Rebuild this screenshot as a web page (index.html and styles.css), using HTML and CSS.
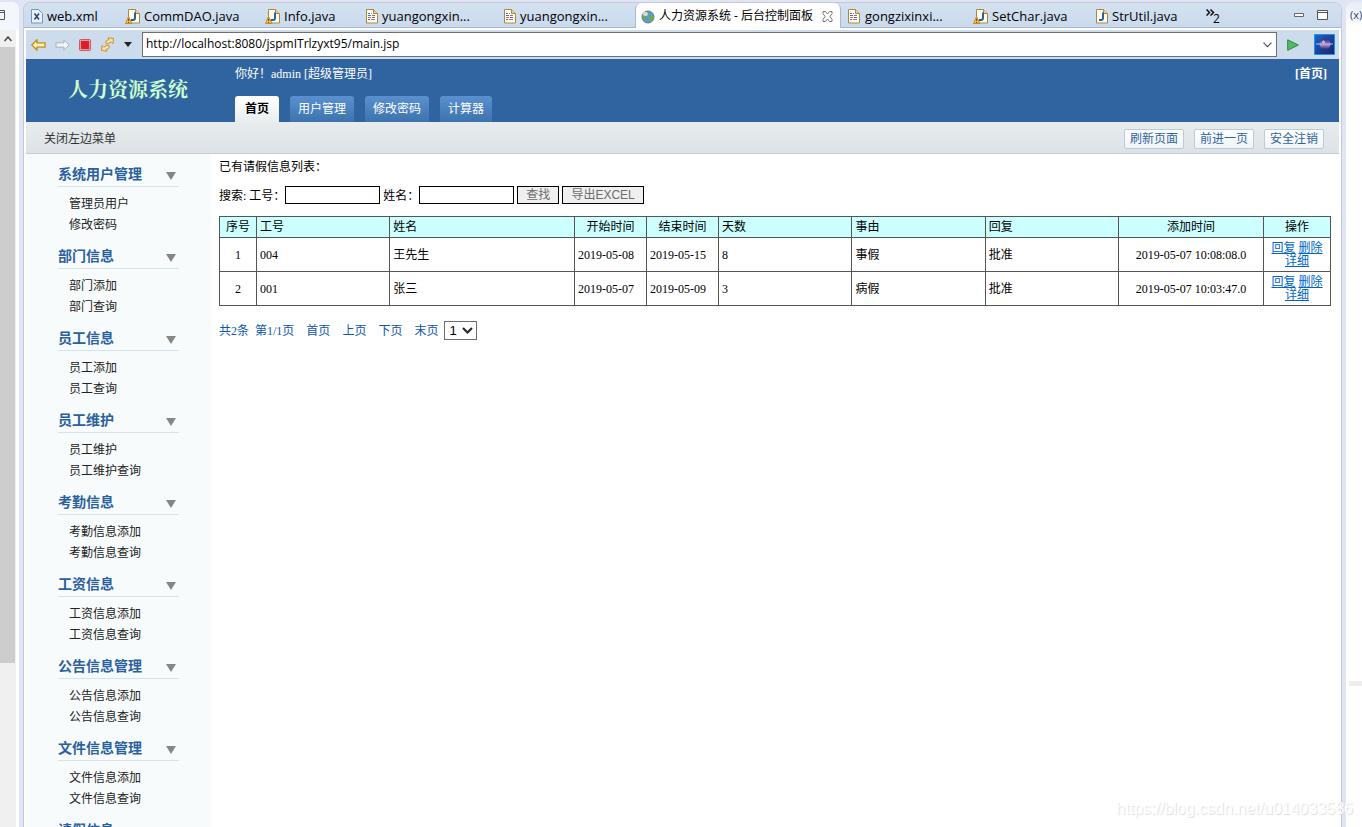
FILE: index.html
```html
<!DOCTYPE html>
<html lang="zh-CN">
<head>
<meta charset="utf-8">
<title>人力资源系统 - 后台控制面板</title>
<link rel="stylesheet" href="styles.css">
</head>
<body>
<svg class="defs" aria-hidden="true">
  <defs>
    <symbol id="page" viewBox="0 0 12 15">
      <path d="M.5.5h7l4 4v9.500h-11z" fill="#fffdf4" stroke="#a98a3c"/><path d="M7.500.5v4h4" fill="#ecd391" stroke="#a98a3c"/>
    </symbol>
    <symbol id="doc" viewBox="0 0 12 15">
      <use href="#page" width="12" height="15"/>
      <path d="M2 4.500h2M2 6.500h3M6 8.500h3M2 10.500h2" stroke="#3f74c4"/><path d="M5 4.500h1M2 8.500h3M5 10.500h4" stroke="#d1605e"/><path d="M6 6.500h3" stroke="#7a6fb0"/>
    </symbol>
    <symbol id="java" viewBox="0 0 12 15">
      <use href="#page" width="12" height="15"/>
      <path d="M7 3.500v5.500q0 2-2 2H3" fill="none" stroke="#2b6195" stroke-width="2"/>
    </symbol>
    <symbol id="javawarn" viewBox="0 0 15 15">
      <use href="#java" x="3" width="12" height="15"/>
      <path d="M3.500 7.500 7 14.500H.5z" fill="#f5bd55" stroke="#c98829"/><path d="M3.700 9.500v2.500M3.700 13v1" stroke="#5a3a10"/>
    </symbol>
  </defs>
</svg>
<div class="workbench">
  <aside class="left-view">
    <div class="view-tab"><svg width="5" height="10" viewBox="0 0 5 10"><path d="M0 .5h4.500v9H0M0 2.500h4" fill="none" stroke="#555"/></svg></div>
    <div class="scroll-up"><svg width="8" height="6" viewBox="0 0 8 6"><path d="m.5 5 3.500-4 3.500 4" fill="none" stroke="#444" stroke-width="1.500"/></svg></div>
    <div class="scroll-track"><div class="scroll-thumb"></div></div>
  </aside>

  <section class="editor">
    <div class="tabs">
      <button class="tab tab-xml"><svg width="12" height="15" viewBox="0 0 12 15"><path d="M.5.5h7l4 4v9.500h-11z" fill="#e9f2fb" stroke="#7995b5"/><path d="m3.500 4.500 4.500 6M8 4.500l-4.500 6" stroke="#1f4778" stroke-width="1.500"/></svg><span>web.xml</span></button>
      <button class="tab tab-comm"><svg width="15" height="15"><use href="#javawarn"/></svg><span>CommDAO.java</span></button>
      <button class="tab tab-info"><svg width="15" height="15"><use href="#javawarn"/></svg><span>Info.java</span></button>
      <button class="tab tab-doc"><svg width="12" height="15"><use href="#doc"/></svg><span>yuangongxin...</span></button>
      <button class="tab tab-doc"><svg width="12" height="15"><use href="#doc"/></svg><span>yuangongxin...</span></button>
      <button class="tab tab-active"><svg width="14" height="14" viewBox="0 0 14 14"><circle cx="7" cy="7" r="6" fill="#5c9ccb" stroke="#5d7894"/><path d="M2 4q2-3 5-2l1 2-3 2 1 2-2 1-3-2zM9 6l3-1 1 3-3 4-2-2z" fill="#73a852"/><ellipse cx="4.500" cy="4" rx="2.500" ry="2" fill="#fff" opacity=".7"/></svg><span>人力资源系统 - 后台控制面板</span><svg class="close" width="11" height="11" viewBox="0 0 11 11"><path d="M1 .5h2.500l2 2.500 2-2.500H10v2L8 5.500l2 3v2H7.500l-2-2.500-2 2.500H1v-2l2-3-2-3z" fill="#fff" stroke="#777"/></svg></button>
      <button class="tab tab-gongzi"><svg width="12" height="15"><use href="#doc"/></svg><span>gongzixinxi...</span></button>
      <button class="tab tab-char"><svg width="15" height="15"><use href="#javawarn"/></svg><span>SetChar.java</span></button>
      <button class="tab tab-str"><svg width="12" height="15"><use href="#java"/></svg><span>StrUtil.java</span></button>
      <button class="more" aria-label="更多"><svg width="9" height="7" viewBox="0 0 9 7"><path d="m.5.5 3 3-3 3M4.500.5l3 3-3 3" fill="none" stroke="#111" stroke-width="1.500"/></svg><span>2</span></button>
      <div class="win">
        <button aria-label="最小化"><svg width="10" height="4"><path d="M.5.5h9v3h-9z" fill="#fff" stroke="#666"/></svg></button>
        <button aria-label="最大化"><svg width="11" height="10"><path d="M.5.5h10v9H.5zM.5 2.500h10" fill="#fff" stroke="#555"/></svg></button>
      </div>
    </div>

    <div class="toolbar">
      <button aria-label="后退"><svg width="15" height="12" viewBox="0 0 15 12"><path d="M.8 6 6 .8v3h8v4.400H6v3z" fill="#fff1b8" stroke="#c68a16" stroke-width="1.300"/></svg></button>
      <button aria-label="前进"><svg width="15" height="12" viewBox="0 0 15 12"><path d="M14.200 6 9 .8v3H1v4.400h8v3z" fill="#f1f4f7" stroke="#aab1ba"/></svg></button>
      <button aria-label="停止"><svg width="12" height="12"><rect x=".5" y=".5" width="11" height="11" rx="1" fill="#e79a9a" stroke="#c75c60"/><path d="M2 2h8v8H2z" fill="#dc1e2c"/></svg></button>
      <button aria-label="刷新"><svg width="15" height="15" viewBox="0 0 15 15"><path d="M5.500 6q0-3 3.500-3.500L8 .8l5.500.7-.5 5-1.700-1.500Q9 5 8.500 7zM9.500 9q0 3-3.500 3.500l1 1.700-5.500-.7.500-5L3.700 10Q6 10 6.500 8z" fill="#fce29a" stroke="#c28a26" stroke-width=".9"/></svg></button>
      <button aria-label="刷新选项"><svg width="8" height="5"><path d="M0 0h8L4 5z" fill="#222"/></svg></button>
      <div class="address">
        <input type="text" aria-label="地址" value="http://localhost:8080/jspmITrlzyxt95/main.jsp">
        <button aria-label="历史地址"><svg width="9" height="6" viewBox="0 0 9 6"><path d="m.5.7 4 4 4-4" fill="none" stroke="#555" stroke-width="1.200"/></svg></button>
      </div>
      <button class="go" aria-label="转到"><svg width="12" height="12" viewBox="0 0 12 12"><path d="M.7.8 11.300 6 .7 11.300z" fill="#56b765" stroke="#2b8b43"/></svg></button>
      <svg class="brand" width="21" height="21" viewBox="0 0 21 21"><defs><linearGradient id="sky" x2="1" y2="1"><stop stop-color="#1a66c8"/><stop offset="1" stop-color="#17246c"/></linearGradient><linearGradient id="orb" y2="1" x2="0"><stop stop-color="#3b276c"/><stop offset=".4" stop-color="#7f66b4"/><stop offset=".6" stop-color="#a48fd0"/><stop offset="1" stop-color="#302065"/></linearGradient></defs><path d="M.5.500h20v20H.5z" fill="url(#sky)" stroke="#2291ee"/><circle cx="11" cy="10" r="5.500" fill="url(#orb)"/><path d="M2 10h17" stroke="#b5c7f5"/><circle cx="9.500" cy="8" r="1.500" fill="#e8dcfa" opacity=".7"/></svg>
    </div>

    <div class="page">
      <header class="head">
        <h1>人力资源系统</h1>
        <div class="head-main">
          <p>你好！admin [超级管理员]</p>
          <nav>
            <a class="current" href="#">首页</a>
            <a href="#">用户管理</a>
            <a href="#">修改密码</a>
            <a href="#">计算器</a>
          </nav>
        </div>
        <a class="home" href="#">[首页]</a>
      </header>
      <div class="subbar">
        <a class="toggle" href="#">关闭左边菜单</a>
        <a class="act" href="#">刷新页面</a>
        <a class="act" href="#">前进一页</a>
        <a class="act" href="#">安全注销</a>
      </div>
      <div class="body">
        <nav class="side">
          <section><h2>系统用户管理<i></i></h2><a href="#">管理员用户</a><a href="#">修改密码</a></section>
          <section><h2>部门信息<i></i></h2><a href="#">部门添加</a><a href="#">部门查询</a></section>
          <section><h2>员工信息<i></i></h2><a href="#">员工添加</a><a href="#">员工查询</a></section>
          <section><h2>员工维护<i></i></h2><a href="#">员工维护</a><a href="#">员工维护查询</a></section>
          <section><h2>考勤信息<i></i></h2><a href="#">考勤信息添加</a><a href="#">考勤信息查询</a></section>
          <section><h2>工资信息<i></i></h2><a href="#">工资信息添加</a><a href="#">工资信息查询</a></section>
          <section><h2>公告信息管理<i></i></h2><a href="#">公告信息添加</a><a href="#">公告信息查询</a></section>
          <section><h2>文件信息管理<i></i></h2><a href="#">文件信息添加</a><a href="#">文件信息查询</a></section>
          <section><h2>请假信息</h2></section>
        </nav>
        <main>
          <p class="caption">已有请假信息列表：</p>
          <form class="search">
            <label for="no">搜索: 工号：</label><input id="no" type="text">
            <label for="name">姓名：</label><input id="name" type="text">
            <button type="button">查找</button>
            <button type="button">导出EXCEL</button>
          </form>
          <table>
            <colgroup><col class="c-idx"><col class="c-wide"><col><col class="c-date"><col class="c-date"><col class="c-wide"><col class="c-wide"><col class="c-wide"><col class="c-time"><col class="c-ops"></colgroup>
            <thead>
              <tr><th class="mid">序号</th><th>工号</th><th>姓名</th><th class="mid">开始时间</th><th class="mid">结束时间</th><th>天数</th><th>事由</th><th>回复</th><th class="mid">添加时间</th><th class="mid">操作</th></tr>
            </thead>
            <tbody>
              <tr><td class="mid">1</td><td>004</td><td>王先生</td><td>2019-05-08</td><td>2019-05-15</td><td>8</td><td>事假</td><td>批准</td><td class="mid">2019-05-07 10:08:08.0</td><td class="mid"><a href="#">回复</a> <a href="#">删除</a> <a href="#">详细</a></td></tr>
              <tr><td class="mid">2</td><td>001</td><td>张三</td><td>2019-05-07</td><td>2019-05-09</td><td>3</td><td>病假</td><td>批准</td><td class="mid">2019-05-07 10:03:47.0</td><td class="mid"><a href="#">回复</a> <a href="#">删除</a> <a href="#">详细</a></td></tr>
            </tbody>
          </table>
          <div class="pager">
            <span class="count">共2条</span><span>第1/1页</span><a href="#">首页</a><a href="#">上页</a><a href="#">下页</a><a class="last" href="#">末页</a>
            <div class="pick"><select aria-label="页码"><option>1</option></select><svg width="11" height="7" viewBox="0 0 11 7"><path d="m1 1 4.500 4.500L10 1" fill="none" stroke="#222" stroke-width="2"/></svg></div>
          </div>
        </main>
      </div>
    </div>
  </section>

  <aside class="right-view"><div class="view-tab">(x)</div><div class="sash"></div></aside>
</div>
<div class="watermark">https://blog.csdn.net/u014033586</div>
</body>
</html>
```

FILE: styles.css
```css
* { box-sizing: border-box; }
body { margin: 0; height: 100vh; overflow: hidden; background: #dfe5f5; font-family: "Liberation Serif", "Noto Sans CJK SC", serif; font-size: 12px; line-height: 18px; color: #000; }
h1, h2, p { margin: 0; }
a { color: inherit; text-decoration: none; }
button { font: inherit; color: inherit; background: none; border: 0; padding: 0; }
svg { display: block; flex: none; }
.defs { position: absolute; width: 0; height: 0; }

.workbench { display: flex; gap: 4px; height: 100vh; padding-top: 2px; }
.left-view { width: 19px; flex: none; display: flex; flex-direction: column; background: #fff; border-top-right-radius: 8px; }
.left-view .view-tab { height: 28px; padding-top: 8px; background: #f3f6fc; border-top-right-radius: 8px; }
.scroll-up { height: 17px; width: 16px; padding: 6px 0 0 4px; background: #f0f0f0; }
.scroll-track { flex: 1; width: 16px; background: #f0f0f0; }
.scroll-thumb { height: 79%; width: 15px; background: #cdcdcd; }
.right-view { width: 16px; flex: none; background: #fff; overflow: hidden; border-top-left-radius: 8px; display: flex; flex-direction: column; }
.right-view .view-tab { height: 26px; padding: 4px 0 0 4px; font: 11px/18px "Open Sans", sans-serif; color: #27456f; background: linear-gradient(#e6ecf7, #fff); }
.sash { margin: auto 0 141px 3px; height: 5px; background: #eee; }

.editor { flex: 1; min-width: 0; display: flex; flex-direction: column; background: #fff; border: 1px solid #c6c8d3; border-bottom: 0; border-radius: 8px 8px 0 0; padding: 0 2px; }
.tabs { display: flex; margin: 0 -2px 2px; height: 25px; background: linear-gradient(#d3e1f0, #cbdbed); border-bottom: 1px solid #a9b7d3; border-radius: 7px 7px 0 0; font: 13px/24px "Open Sans", "Noto Sans CJK SC", sans-serif; }
.tab { display: flex; align-items: center; gap: 4px; padding: 2px 0 0 6px; height: 25px; white-space: nowrap; flex: none; }
.tab span { line-height: 22px; padding-bottom: 2px; }
.tab-xml { width: 95px; padding-left: 7px; }
.tab-comm { width: 140px; }
.tab-info { width: 101px; }
.tab-doc { width: 138px; }
.tab-active { width: 206px; margin-left: -1px; background: #fff; border: 1px solid #a9b7d3; border-width: 0 1px; border-radius: 6px 6px 0 0; font-size: 12px; padding-left: 5px; }
.tab-active .close { margin-left: auto; margin-right: 7px; }
.tab-gongzi { width: 126px; padding-left: 7px; gap: 5px; }
.tab-char { width: 123px; }
.tab-str { width: 116px; }
.more { display: flex; gap: 0; font-size: 12px; padding-top: 6px; height: 25px; }
.more span { line-height: 20px; margin-left: -2px; }
.win { margin-left: auto; display: flex; gap: 13px; padding: 7px 13px 0 0; align-items: flex-start; }
.win button { height: 10px; }

.toolbar { display: flex; align-items: center; height: 29px; flex: none; background: #cddcec; padding: 0 4px 0 5px; gap: 9px; }
.address { flex: 1; display: flex; align-items: center; height: 25px; background: #fff; border: 1px solid #6f6f6f; margin-left: 1px; padding-right: 4px; }
.address input { flex: 1; min-width: 0; border: 0; outline: 0; padding: 0 3px 2px; background: none; font: 12px/20px "Open Sans", sans-serif; color: #000; }
.go { margin: 0 6px 0 1px; }

.page { flex: 1; min-height: 0; display: flex; flex-direction: column; }
.head { display: flex; flex: none; height: 63px; background: #3064a0; color: #fff; }
.head h1 { width: 209px; padding-left: 42px; font: bold 20px/60px "Noto Serif CJK SC", "Noto Sans CJK SC", serif; color: #cfc; }
.head-main { flex: 1; display: flex; flex-direction: column; justify-content: space-between; padding-top: 6px; }
.head nav { display: flex; gap: 11px; align-items: flex-end; }
.head nav a { padding: 0 8px; height: 26px; line-height: 26px; border-radius: 3px 3px 0 0; background: linear-gradient(#5990cf, #3d73ae); }
.head nav .current { padding: 0 10px; color: #000; font-weight: bold; background: linear-gradient(#fff, #e9edef); }
.home { padding: 6px 12px 0 0; font-weight: bold; }
.subbar { display: flex; align-items: center; flex: none; gap: 10px; height: 32px; padding: 2px 15px 0 18px; background: linear-gradient(#e8ecee, #dce2e6); border-bottom: 1px solid #c2ccd2; color: #333; }
.toggle { margin-right: auto; }
.act { padding: 0 5px; height: 20px; line-height: 18px; border: 1px solid #b9ced6; border-radius: 2px; background: linear-gradient(#fff, #f0f4f6); color: #2f649f; }

.body { flex: 1; min-height: 0; display: flex; }
.side { width: 185px; flex: none; overflow: hidden; background: #f7fbfc; padding: 8px 32px 0; }
.side section { padding-bottom: 8px; }
.side h2 { display: flex; align-items: center; justify-content: space-between; height: 25px; margin-bottom: 7px; padding-right: 3px; border-bottom: 1px solid #d5e3ea; font: bold 14px/22px "Noto Sans CJK SC", sans-serif; padding-bottom: 2px; color: #2a609d; }
.side i { margin-top: 6px; border: solid transparent; border-width: 8px 5px 0; border-top-color: #868686; }
.side a { display: block; padding-left: 11px; line-height: 21px; color: #222; }

main { flex: 1; min-width: 0; padding: 4px 8px 0; }
.search { display: flex; align-items: center; margin: 10px 0 12px; height: 18px; gap: 3px; white-space: nowrap; }
.search label { padding-top: 1px; margin-right: -3px; }
.search input { width: 95px; height: 18px; border: 1px solid #000; padding: 0 2px; }
.search button { height: 18px; padding: 0 8px; border: 1px solid #000; background: #efefef; color: #6d6d6d; font: 12px/16px "Liberation Sans", "Noto Sans CJK SC", sans-serif; }
table { width: 100%; table-layout: fixed; border-collapse: collapse; line-height: 13px; }
.c-idx { width: 37px; }
.c-wide { width: 12%; }
.c-date { width: 72px; }
.c-time { width: 145px; }
.c-ops { width: 67px; }
th, td { border: 1px solid #555; padding: 1px 3px 0; text-align: left; font-weight: normal; }
th { height: 21px; background: #cff; }
td { height: 34px; }
.mid { text-align: center; }
td a { color: #0066cc; text-decoration: underline; }
.pager { display: flex; align-items: center; margin-top: 15px; gap: 12px; color: #0d56ae; }
.count { margin-right: -6px; }
.last { margin-right: -6px; }
.pick { display: grid; align-items: center; width: 33px; }
.pick select, .pick svg { grid-area: 1 / 1; }
.pick select { appearance: none; height: 19px; border: 1px solid #6c6c6c; border-radius: 0; background: #fff; padding: 0 4px; font: 13px/17px "Liberation Sans", sans-serif; }
.pick svg { justify-self: end; margin-right: 4px; pointer-events: none; }

.watermark { position: absolute; right: 9px; bottom: 9px; font: 16px/18px "Liberation Sans", sans-serif; color: #fff; text-shadow: 1px 1px 1px #ddd; }
```
